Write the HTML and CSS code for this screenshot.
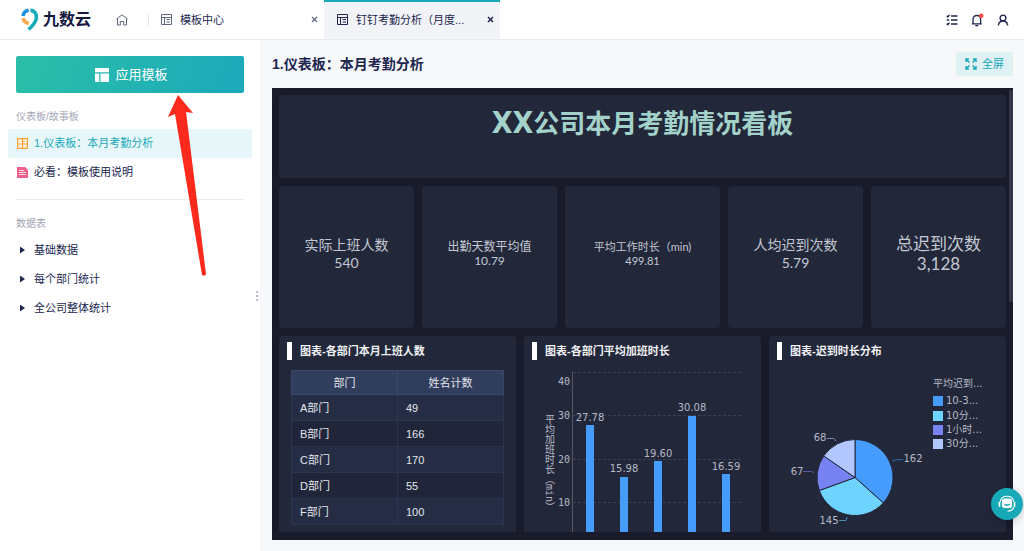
FILE: index.html
```
<!DOCTYPE html>
<html lang="zh-CN">
<head>
<meta charset="utf-8">
<title>九数云</title>
<link rel="stylesheet" href="styles.css">
</head>
<body>
<header class="topbar">
  <a class="brand" href="#">
    <svg class="brand-mark" width="18" height="23" viewBox="0 0 18 23" fill="none" stroke-width="3.600">
      <path d="M2 8A6.800 6.800 0 0 1 7.700 2.300" stroke="#1c92e0"/>
      <path d="M2 10.300A6.800 6.800 0 0 0 7.700 15.300" stroke="#f8a84a"/>
      <path d="M9.500 2.100C14 2.800 16 6.500 15.300 10.500C14.600 14 11.500 18 7.500 21.500" stroke="#16abb8"/>
    </svg>
    <span class="brand-name">九数云</span>
  </a>
  <a class="home" href="#" aria-label="首页">
    <svg width="12" height="12" viewBox="0 0 12 12" fill="none" stroke="#5f6480"><path d="M.5 5.200L6 .8L11.500 5.200M1.500 4.800V11H4.300V7.500H7.700V11H10.500V4.800"/></svg>
  </a>
  <nav class="tabs">
    <div class="tab">
      <svg width="11" height="11" viewBox="0 0 11 11" fill="none" stroke="#5f6480"><path d="M.5 .5H10.500V10.500H.5ZM.5 3.500H10.500M3.500 3.500V10.500M5.500 5.500H9M5.500 8H9"/></svg>
      <a class="tab-name" href="#">模板中心</a>
      <button class="close" aria-label="关闭"><svg width="7" height="7" viewBox="0 0 7 7" stroke="#5f6480" stroke-width="1.200"><path d="M1 1L6 6M6 1L1 6"/></svg></button>
    </div>
    <div class="tab tab-active">
      <svg width="11" height="11" viewBox="0 0 11 11" fill="none" stroke="#20264f"><path d="M.5 .5H10.500V10.500H.5ZM.5 3.500H10.500M3.500 3.500V10.500M5.500 5.500H9M5.500 8H9"/></svg>
      <a class="tab-name" href="#">钉钉考勤分析（月度...</a>
      <button class="close" aria-label="关闭"><svg width="7" height="7" viewBox="0 0 7 7" stroke="#20264f" stroke-width="1.500"><path d="M1 1L6 6M6 1L1 6"/></svg></button>
    </div>
  </nav>
  <div class="tools">
    <button class="tool" aria-label="任务"><svg width="12" height="12" viewBox="0 0 12 12" fill="none" stroke="#20264f" stroke-width="1.400"><path d="M5 2H11.500M5 6H11.500M5 10H11.500M.8 1.800L1.800 3L3.500 1M.8 6H3.200M.8 9.500L1.800 10.700L3.500 8.700"/></svg></button>
    <button class="tool" aria-label="通知"><svg width="13" height="14" viewBox="0 0 13 14" fill="none" stroke="#20264f" stroke-width="1.300"><path d="M.8 10.800H10.800M2 10.500V6.500C2 4 3.600 2.500 5.800 2.500S9.600 4 9.600 6.500V10.500M4.300 12.700H7.300"/><circle cx="10.200" cy="2.800" r="2.400" fill="#f5504e" stroke="none"/></svg></button>
    <button class="tool" aria-label="账户"><svg width="12" height="12" viewBox="0 0 12 12" fill="none" stroke="#20264f" stroke-width="1.400"><circle cx="6" cy="4" r="2.900"/><path d="M1.300 11.300C1.800 8.500 3.200 7 6 7S10.200 8.500 10.700 11.300"/></svg></button>
  </div>
</header>

<div class="body">
  <aside class="sidebar">
    <button class="apply">
      <svg width="14" height="14" viewBox="0 0 14 14" fill="#fff"><path d="M0 0H14V4.200H0ZM0 5.500H4.200V14H0ZM5.500 5.500H14V14H5.500Z"/></svg>
      应用模板
    </button>
    <h2 class="group">仪表板/故事板</h2>
    <a class="item item-active" href="#">
      <svg width="11" height="11" viewBox="0 0 11 11" fill="#fff4e4" stroke="#f6a13c" stroke-width="1.200"><path d="M.6 .6H10.400V10.400H.6ZM.6 6H10.400M5.500 .6V10.400M5.500 3.500H8"/></svg>
      1.仪表板：本月考勤分析
    </a>
    <a class="item" href="#">
      <svg width="11" height="11" viewBox="0 0 11 11"><path d="M0 0H8L11 3V11H0Z" fill="#f0608b"/><path d="M2 3.500H7M2 5.500H9M2 7.500H9" stroke="#ffd9e5"/></svg>
      必看：模板使用说明
    </a>
    <hr class="rule">
    <h2 class="group">数据表</h2>
    <a class="item" href="#"><span class="caret"></span>基础数据</a>
    <a class="item" href="#"><span class="caret"></span>每个部门统计</a>
    <a class="item" href="#"><span class="caret"></span>全公司整体统计</a>
    <span class="grip"></span>
    <svg class="pointer" width="40" height="184" viewBox="0 0 40 184"><path d="M11 1L26 19L19 18L39 180Q38 183 35 181L8 20L1 23Z" fill="#fb2a1d"/></svg>
  </aside>

  <main class="main">
    <div class="heading">
      <h1 class="title">1.仪表板：本月考勤分析</h1>
      <button class="fullscreen">
        <svg width="12" height="12" viewBox="0 0 12 12" fill="none" stroke="#18a9b8" stroke-width="1.400"><path d="M1 4V1H4M1 1L4.500 4.500M8 1H11V4M11 1L7.500 4.500M1 8V11H4M1 11L4.500 7.500M8 11H11V8M11 11L7.500 7.500"/></svg>
        全屏
      </button>
    </div>

    <div class="board">
      <section class="card banner"><h2 class="banner-text"><span class="banner-x">XX</span>公司本月考勤情况看板</h2></section>

      <section class="kpis">
        <div class="card kpi kpi-m"><span>实际上班人数</span><span>540</span></div>
        <div class="card kpi kpi-s"><span>出勤天数平均值</span><span>10.79</span></div>
        <div class="card kpi kpi-xs"><span>平均工作时长（min)</span><span>499.81</span></div>
        <div class="card kpi kpi-m"><span>人均迟到次数</span><span>5.79</span></div>
        <div class="card kpi kpi-l"><span>总迟到次数</span><span>3,128</span></div>
      </section>

      <section class="charts">
        <div class="card chart">
          <h3 class="chart-title">图表-各部门本月上班人数</h3>
          <table class="data">
            <thead><tr><th>部门</th><th>姓名计数</th></tr></thead>
            <tbody>
              <tr><td>A部门</td><td>49</td></tr>
              <tr><td>B部门</td><td>166</td></tr>
              <tr><td>C部门</td><td>170</td></tr>
              <tr><td>D部门</td><td>55</td></tr>
              <tr><td>F部门</td><td>100</td></tr>
            </tbody>
          </table>
        </div>

        <div class="card chart">
          <h3 class="chart-title">图表-各部门平均加班时长</h3>
          <svg class="plot" viewBox="0 0 237 166" preserveAspectRatio="xMidYMin meet">
            <g class="grid"><path d="M49 4.500H219M49 47.500H219M49 91.500H219M49 134.500H219"/></g>
            <path class="axis" d="M48.500 4V166"/>
            <g class="ticks"><text x="46" y="17">40</text><text x="46" y="51">30</text><text x="46" y="95">20</text><text x="46" y="138">10</text></g>
            <text class="axis-name" x="25" y="46">平均加班时长（min）</text>
            <g class="bars">
              <rect x="62" y="57" width="8" height="109"/>
              <rect x="96" y="109" width="8" height="57"/>
              <rect x="130" y="93" width="8" height="73"/>
              <rect x="164" y="48" width="8" height="118"/>
              <rect x="198" y="106" width="8" height="60"/>
            </g>
            <g class="values"><text x="66" y="53">27.78</text><text x="100" y="104">15.98</text><text x="134" y="89">19.60</text><text x="168" y="43">30.08</text><text x="202" y="102">16.59</text></g>
          </svg>
        </div>

        <div class="card chart">
          <h3 class="chart-title">图表-迟到时长分布</h3>
          <svg class="plot" viewBox="0 0 237 166" preserveAspectRatio="xMidYMin meet">
            <g class="pie">
              <path fill="#459cfd" d="M86 109.500V71.500A38 38 0 0 1 114.300 134.900Z"/>
              <path fill="#6fd3ff" d="M86 109.500L114.300 134.900A38 38 0 0 1 50.300 122.500Z"/>
              <path fill="#7783f3" d="M86 109.500L50.300 122.500A38 38 0 0 1 54.700 87.900Z"/>
              <path fill="#b2c7ff" d="M86 109.500L54.700 87.900A38 38 0 0 1 86 71.500Z"/>
            </g>
            <g fill="none">
              <path stroke="#2e6cb0" d="M123 93Q126 91.500 134 91.500"/>
              <path stroke="#4a8daa" d="M70 152.500H77L78 149"/>
              <path stroke="#5058a5" d="M34 103.500H42L45 104.500"/>
              <path stroke="#7787ad" d="M58 70.500H65L67 73"/>
            </g>
            <g class="values"><text x="144" y="94">162</text><text x="60" y="156">145</text><text x="28" y="107">67</text><text x="51" y="73">68</text></g>
            <g class="legend">
              <text x="164" y="19">平均迟到...</text>
              <rect x="164" y="28" width="10" height="10" fill="#459cfd"/><text x="177" y="36">10-3...</text>
              <rect x="164" y="43" width="10" height="10" fill="#6fd3ff"/><text x="177" y="51">10分...</text>
              <rect x="164" y="57" width="10" height="10" fill="#7783f3"/><text x="177" y="65">1小时...</text>
              <rect x="164" y="71" width="10" height="10" fill="#b2c7ff"/><text x="177" y="79">30分...</text>
            </g>
          </svg>
        </div>
      </section>
      <span class="scroll-thumb"></span>
    </div>
  </main>
</div>

<button class="support" aria-label="客服">
  <svg width="18" height="18" viewBox="0 0 16 16" fill="none" stroke="#fff"><rect x="3.500" y="3" width="9" height="8.500" rx="2.500" fill="#fff" stroke="none"/><path d="M2 6C3 -.5 13 -.5 14 6" /><path d="M1.300 6V10.500M14.700 6V10.500" stroke-width="1.500"/><path d="M14 10.500Q13 14.300 8.500 14.300" stroke-width="1.200"/><path d="M5.500 8.500Q8 10.500 10.500 8.500Z" fill="#18a9b8" stroke="#18a9b8" stroke-width=".6"/></svg>
</button>
</body>
</html>
```
FILE: styles.css
```
* { box-sizing: border-box; }
body {
  margin: 0;
  height: 100vh;
  display: flex;
  flex-direction: column;
  overflow: hidden;
  background: #f7f8fa;
  color: #20264f;
  font: 11px/16px "Liberation Sans", "Noto Sans CJK SC", sans-serif;
}
a { color: inherit; text-decoration: none; }
button { border: 0; padding: 0; background: none; font: inherit; color: inherit; cursor: pointer; }
h1, h2, h3 { margin: 0; }
svg { display: block; flex: none; }

/* Top bar */
.topbar {
  display: flex;
  align-items: center;
  flex: none;
  height: 40px;
  padding-right: 15px;
  background: #fff;
  border-bottom: 1px solid #e9eaee;
}
.brand { display: flex; align-items: center; gap: 4px; padding-left: 21px; color: #14183f; }
.brand-name { font-size: 16px; line-height: 20px; font-weight: 700; }
.home { margin-left: 25px; padding-right: 20px; border-right: 1px solid #e4e6ec; }
.tabs { display: flex; align-self: stretch; }
.tab { display: flex; align-items: center; width: 175px; padding: 0 6px 0 12px; gap: 8px; }
.tab-active {
  width: 176px;
  padding: 0 6px 0 13px;
  background: #f2f3f7;
  box-shadow: inset 0 2px #18a9b8;
}
.tab-name { flex: 1; white-space: nowrap; }
.tools { display: flex; align-items: center; gap: 13px; margin-left: auto; }

/* Sidebar */
.body { display: flex; flex: 1; min-height: 0; }
.sidebar {
  position: relative;
  flex: none;
  width: 260px;
  padding: 16px 8px;
  background: #fff;
}
.apply {
  display: flex;
  align-items: center;
  justify-content: center;
  gap: 6px;
  width: 228px;
  height: 37px;
  margin: 0 8px 16px;
  padding-left: 3px;
  border-radius: 2px;
  background: linear-gradient(110deg, #2bbfa8, #1ba9bb);
  color: #fff;
  font-size: 13px;
}
.group { padding: 0 8px; margin-bottom: 4px; color: #a3a6b6; font-size: 10px; font-weight: 400; }
.item { display: flex; align-items: center; gap: 6px; height: 29px; padding: 0 9px 1px; border-radius: 2px; }
.item-active { background: #e7f6f8; color: #18a9b8; }
.caret {
  width: 11px;
  height: 7px;
  background: #20264f;
  clip-path: polygon(3px 0, 8px 50%, 3px 100%);
}
.rule { margin: 12px 8px 16px; border: 0; border-top: 1px solid #e9eaee; }
.grip {
  position: absolute;
  right: 2px;
  top: 251px;
  height: 10px;
  border-right: 2px dotted #b9bcc8;
}
.pointer { position: absolute; left: 167px; top: 54px; }

/* Main */
.main { flex: 1; display: flex; flex-direction: column; min-width: 0; padding: 12px 11px 11px 12px; }
.heading { display: flex; align-items: center; justify-content: space-between; margin-bottom: 12px; }
.title { font-size: 14px; line-height: 24px; font-weight: 700; }
.fullscreen {
  display: flex;
  align-items: center;
  gap: 5px;
  height: 24px;
  padding: 0 9px;
  border-radius: 2px;
  background: #e0f1f4;
  color: #18a9b8;
}
.board {
  position: relative;
  flex: 1;
  display: flex;
  flex-direction: column;
  gap: 8px;
  min-height: 0;
  padding: 7px 7px 8px;
  background: #1a1b2a;
  color: #c3c7d3;
}
.card { border-radius: 4px; background: #22273a; }
.banner { flex: none; height: 83px; padding-top: 12px; text-align: center; }
.banner-text { color: #a3d2ca; font-size: 26px; line-height: 32px; font-weight: 700; }
.banner-x { font-family: "DejaVu Sans Condensed", "DejaVu Sans", sans-serif; font-size: 30px; }
.kpis { flex: none; display: grid; grid-template-columns: 135fr 135fr 155fr 135fr 135fr; gap: 8px; }
.kpi {
  display: flex;
  flex-direction: column;
  align-items: center;
  justify-content: center;
  height: 142px;
  padding-bottom: 6px;
  white-space: nowrap;
  font-family: Lato, "Noto Sans CJK SC", sans-serif;
}
.kpi-xs { font-size: 11px; line-height: 14px; }
.kpi-s { font-size: 12px; line-height: 14px; }
.kpi-m { font-size: 14px; line-height: 18px; }
.kpi-l { font-size: 17px; line-height: 20px; }
.charts { flex: 1; display: grid; grid-template-columns: repeat(3, 1fr); gap: 8px; min-height: 0; }
.chart { border-radius: 4px 4px 0 0; overflow: hidden; padding-top: 6px; }
.chart-title {
  margin: 0 8px 8px;
  padding-left: 8px;
  border-left: 5px solid #fff;
  color: #f0f1f5;
  font-size: 11px;
  line-height: 18px;
}
.data { width: 213px; margin: 10px 0 0 12px; border-collapse: collapse; table-layout: fixed; color: #e3e5ec; }
.data th, .data td { height: 26px; padding: 0 8px; border: 1px solid #2b3550; font-weight: 400; text-align: left; }
.data th { height: 24px; background: #313d5c; text-align: center; }
.data tr:nth-child(odd) td { background: #252d45; }
.data tr:nth-child(even) td { background: #20253a; }
.data thead th { border-color: #3a4768; }
.plot { width: 100%; }
.grid { fill: none; stroke: #3a3f51; stroke-dasharray: 3 2; }
.axis { stroke: #55596a; }
.bars { fill: #459cfd; }
.pie { stroke: #22273a; }
.ticks, .values, .legend, .axis-name { fill: #b5b9c6; font-size: 10px; }
.ticks { font-family: "DejaVu Sans Mono", monospace; text-anchor: end; }
.values { font-family: "DejaVu Sans", sans-serif; text-anchor: middle; }
.legend { font-family: "DejaVu Sans", "Noto Sans CJK SC", sans-serif; }
.axis-name { font-family: "DejaVu Sans Mono", "Noto Sans CJK SC", monospace; writing-mode: vertical-rl; }
.scroll-thumb { position: absolute; right: 0; top: 2px; width: 4px; height: 212px; background: #343648; }
.support {
  position: fixed;
  right: 1px;
  bottom: 31px;
  display: flex;
  align-items: center;
  justify-content: center;
  width: 32px;
  height: 32px;
  border-radius: 50%;
  background: #18a9b8;
  box-shadow: 0 2px 8px #00000033;
}
```
